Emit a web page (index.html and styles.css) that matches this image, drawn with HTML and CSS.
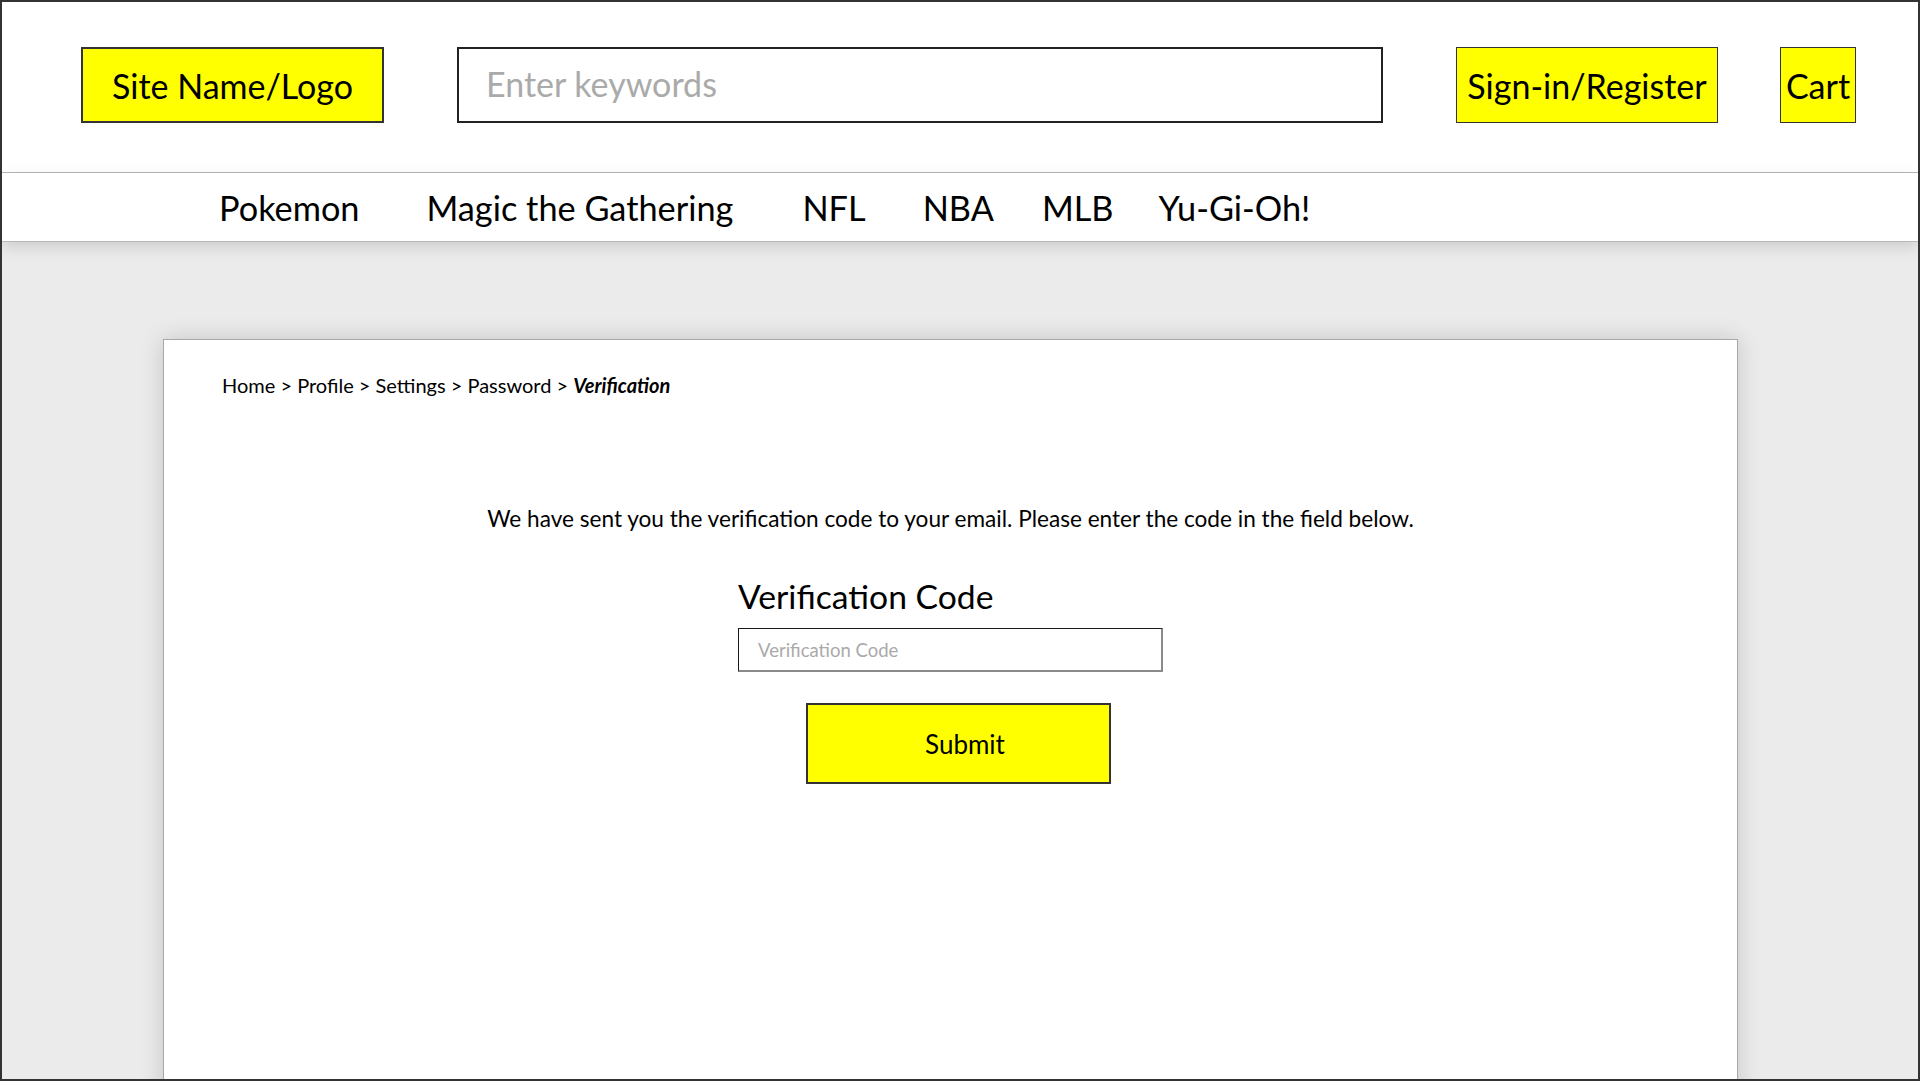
FILE: index.html
```html
<!DOCTYPE html>
<html lang="en">
<head>
<meta charset="utf-8">
<title>Verification</title>
<link rel="stylesheet" href="styles.css">
</head>
<body>
<div class="page">
  <header class="header">
    <div class="logo">Site Name/Logo</div>
    <div class="search"><input class="search-input" type="text" placeholder="Enter keywords"></div>
    <div class="btn signin">Sign-in/Register</div>
    <div class="btn cart">Cart</div>
  </header>
  <nav class="nav">
    <a class="nav-item">Pokemon</a>
    <a class="nav-item">Magic the Gathering</a>
    <a class="nav-item">NFL</a>
    <a class="nav-item">NBA</a>
    <a class="nav-item">MLB</a>
    <a class="nav-item">Yu-Gi-Oh!</a>
  </nav>
  <main class="main">
    <section class="card">
      <div class="breadcrumb">Home &gt; Profile &gt; Settings &gt; Password &gt; <b><i>Verification</i></b></div>
      <p class="message">We have sent you the verification code to your email. Please enter the code in the field below.</p>
      <form class="form">
        <label class="label" for="code">Verification Code</label>
        <input class="code-input" id="code" type="text" placeholder="Verification Code">
        <button class="submit" type="button">Submit</button>
      </form>
    </section>
  </main>
</div>
</body>
</html>
```

FILE: styles.css
```css
* { box-sizing: border-box; }
html, body { margin: 0; padding: 0; }
body {
  font-family: Lato, "Open Sans", "Liberation Sans", sans-serif;
  color: #000;
  background: #fff;
}
.page {
  width: 1920px;
  height: 1081px;
  border: 2px solid #333;
  overflow: hidden;
  background: #ebebeb;
  display: flex;
  flex-direction: column;
}
.header {
  background: #fff;
  height: 171px;
  padding: 45px 0 0 79px;
  display: flex;
  align-items: flex-start;
  border-bottom: 1px solid #b8b8b8;
  flex: none;
}
.logo {
  width: 303px;
  height: 76px;
  background: #ffff00;
  border: 2px solid #333;
  display: flex;
  align-items: center;
  justify-content: center;
  font-size: 34px;
}
.search {
  margin-left: 73px;
  width: 926px;
  height: 76px;
  border: 2px solid #222;
  display: flex;
  align-items: center;
  padding: 0 0 4px 27px;
}
.search-input {
  border: none;
  outline: none;
  width: 100%;
  font-family: inherit;
  font-size: 34px;
  padding: 0;
  background: transparent;
}
.search-input::placeholder { color: #aaa; }
.btn {
  height: 76px;
  background: #ffff00;
  border: 1px solid #333;
  display: flex;
  align-items: center;
  justify-content: center;
  font-size: 34px;
}
.signin { margin-left: 73px; width: 262px; }
.cart { margin-left: 62px; width: 76px; }
.nav {
  background: #fff;
  height: 69px;
  display: flex;
  align-items: center;
  padding: 0 0 0 217px;
  border-bottom: 1px solid #b8b8b8;
  box-shadow: 0 5px 14px rgba(0,0,0,0.13);
  position: relative;
  z-index: 1;
  flex: none;
}
.nav-item {
  font-size: 34.3px;
  color: #000;
}
.nav-item:nth-child(2) { margin-left: 67px; }
.nav-item:nth-child(3) { margin-left: 69px; }
.nav-item:nth-child(4) { margin-left: 57px; }
.nav-item:nth-child(5) { margin-left: 48px; }
.nav-item:nth-child(6) { margin-left: 45px; }
.main {
  flex: 1;
  padding: 97px 0 0 161px;
}
.card {
  width: 1575px;
  height: 800px;
  background: #fff;
  border: 1px solid #a8a8a8;
  box-shadow: 0 0 22px rgba(0,0,0,0.16);
  padding: 31px 0 0 58px;
}
.breadcrumb {
  font-size: 20px;
  line-height: 28px;
}
.message {
  margin: 106px 0 0 -58px;
  text-align: center;
  font-size: 22.6px;
  line-height: 28px;
}
.form {
  margin: 41px 0 0 -58px;
  display: flex;
  flex-direction: column;
  align-items: center;
}
.label {
  width: 425px;
  font-size: 33.7px;
  line-height: 44px;
}
.code-input {
  margin-top: 10px;
  width: 425px;
  height: 44px;
  border-style: solid;
  border-width: 1px 2px 2px 1px;
  border-color: #1a1a1a #8a8a8a #8a8a8a #1a1a1a;
  padding: 0 0 0 19px;
  font-family: inherit;
  font-size: 18.5px;
  outline: none;
}
.code-input::placeholder { color: #aaa; }
.submit {
  margin: 31px 0 0 15px;
  width: 305px;
  height: 81px;
  background: #ffff00;
  border: 2px solid #333;
  font-family: inherit;
  font-size: 26px;
  color: #000;
  padding: 0 0 0 14px;
}
```
